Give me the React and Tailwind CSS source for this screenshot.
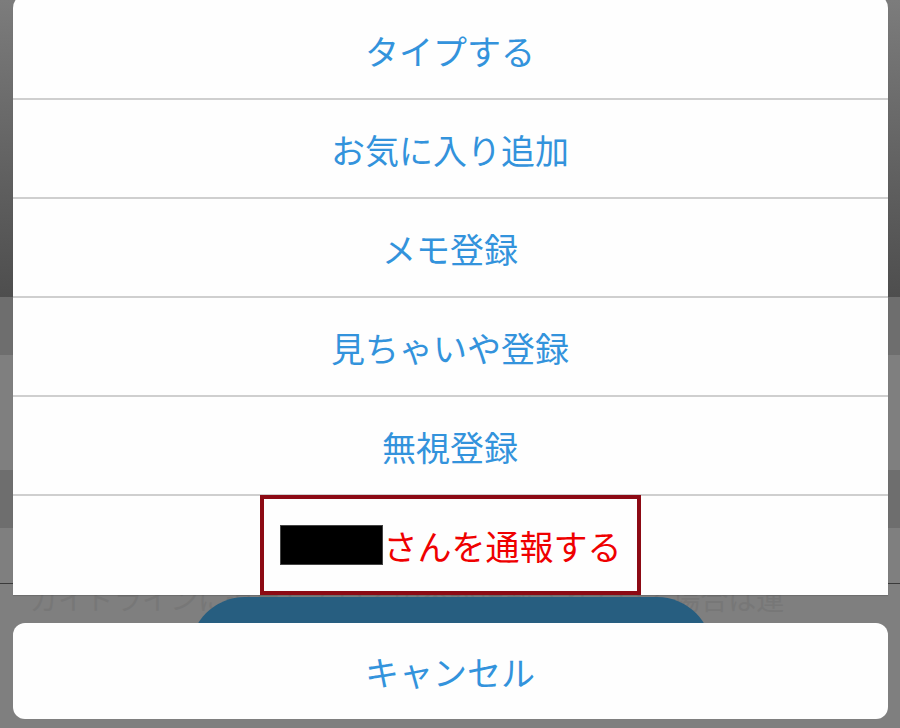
import React from 'react';

const items = ['タイプする', 'お気に入り追加', 'メモ登録', '見ちゃいや登録', '無視登録'];

const font = { fontFamily: '"Noto Sans CJK JP", "Noto Sans", sans-serif' };

const App = () => {
  return (
    <div className="relative w-[900px] h-[728px] overflow-hidden bg-[#7f7f7f]" style={font}>
      {/* dimmed page behind the sheet */}
      <div className="flex flex-col">
        <div className="h-[297px] bg-gradient-to-b from-[#7c7c7c] to-[#4e4e4e]" />
        <div className="h-[58px] bg-[#6e6e6e]" />
        <div className="h-[115px] bg-[#7f7f7f]" />
        <div className="h-[58px] bg-[#6e6e6e]" />
        <div className="h-[56px] bg-[#7f7f7f] border-b border-[#3a3a3a]" />
        <div className="relative h-[143px]">
          <p className="pl-[30px] -mt-[4px] text-[28px] leading-[36px] text-[#777777] whitespace-nowrap">
            ガイドラインに違反している内容が掲載されている場合は運
          </p>
          <p className="pl-[30px] text-[28px] leading-[36px] text-[#777777]">してください</p>
          <div className="absolute left-[190px] top-[13px] w-[522px] h-[110px] rounded-[70px] bg-[#275e80]" />
        </div>
      </div>

      {/* action sheet */}
      <div className="absolute inset-0 flex flex-col items-center">
        <div className="mt-[-6px] w-[875px] bg-[#fefefe] rounded-t-[14px] shadow-[0_1px_1px_rgba(0,0,0,0.15)]">
          {items.map((label, i) => (
            <div
              key={label}
              className={`flex items-center justify-center text-[34px] text-[#3393dc] ${i === 0 ? 'h-[106px] pt-[8px]' : 'h-[99px] pt-[2px]'} border-b-2 border-[#cfcfcf]`}
            >
              {label}
            </div>
          ))}
          <div className="h-[99px] flex justify-center">
            <div className="w-[381px] h-[100px] -mt-[1px] border-[4px] border-[#8c0a14] flex items-center pl-[16px] gap-[1px]">
              <span className="w-[103px] h-[40px] bg-black border border-[#444]" />
              <span className="text-[34px] text-[#ef0000]">さんを通報する</span>
            </div>
          </div>
        </div>
        <div className="mt-[28px] w-[875px] h-[96px] bg-[#fefefe] rounded-[12px] flex items-center justify-center text-[34px] text-[#3393dc]">
          キャンセル
        </div>
      </div>
    </div>
  );
};

export default App;
